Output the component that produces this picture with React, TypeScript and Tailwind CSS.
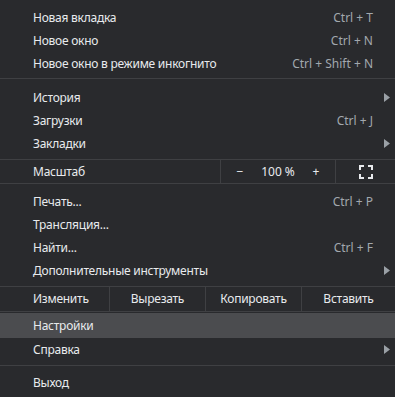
import React from "react";

const font = { fontFamily: '"Noto Sans", "Open Sans", sans-serif' };

function Arrow() {
  return (
    <svg width="6" height="9" viewBox="0 0 6 9" className="ml-auto mr-[5px]">
      <path d="M0 0 L6 4.5 L0 9 Z" fill="#9aa0a6" />
    </svg>
  );
}

function Item({ label, shortcut, sub, h = "h-[23px]" }: { label: string; shortcut?: string; sub?: boolean; h?: string }) {
  return (
    <div className={`flex items-center ${h} pl-[33px] ${sub ? "" : "pr-[22px]"}`}>
      <span className="text-[#e8eaed]">{label}</span>
      {shortcut && <span className="ml-auto tracking-normal text-[#a2a8ae]">{shortcut}</span>}
      {sub && <Arrow />}
    </div>
  );
}

export default function App() {
  return (
    <div className="w-[395px] h-[397px] bg-[#292a2d] text-[12px] tracking-[-0.25px] overflow-hidden flex flex-col pt-[6px]" style={font}>
      <Item label="Новая вкладка" shortcut="Ctrl + T" />
      <Item label="Новое окно" shortcut="Ctrl + N" />
      <Item label="Новое окно в режиме инкогнито" shortcut="Ctrl + Shift + N" />
      <div className="pt-[3px] pb-[7px]">
        <div className="h-px bg-[#3f4043]" />
      </div>
      <Item label="История" sub />
      <Item label="Загрузки" shortcut="Ctrl + J" />
      <Item label="Закладки" sub />
      <div className="h-[4px]" />
      <div className="flex h-[25px] border-y border-[#3f4043] items-stretch">
        <div className="w-[220px] flex items-center pl-[33px] text-[#e8eaed]">Масштаб</div>
        <div className="w-[115px] border-l border-[#3f4043] flex items-center text-[#e8eaed] tracking-normal">
          <span className="w-[38px] text-center">−</span>
          <span className="flex-1 text-center">100 %</span>
          <span className="w-[38px] text-center">+</span>
        </div>
        <div className="flex-1 border-l border-[#3f4043] flex items-center justify-center">
          <svg width="14" height="14" viewBox="0 0 14 14" fill="none" stroke="#e8eaed" strokeWidth="2">
            <path d="M1 5 V1 H5 M9 1 H13 V5 M13 9 V13 H9 M5 13 H1 V9" />
          </svg>
        </div>
      </div>
      <div className="h-[6px]" />
      <Item label="Печать..." shortcut="Ctrl + P" />
      <Item label="Трансляция..." />
      <Item label="Найти..." shortcut="Ctrl + F" />
      <Item label="Дополнительные инструменты" sub />
      <div className="h-[4px]" />
      <div className="flex h-[26px] border-y border-[#3f4043] items-stretch text-[#e8eaed]">
        <div className="w-[109px] flex items-center pl-[33px]">Изменить</div>
        <div className="w-[96px] border-l border-[#3f4043] flex items-center justify-center">Вырезать</div>
        <div className="w-[96px] border-l border-[#3f4043] flex items-center justify-center">Копировать</div>
        <div className="flex-1 border-l border-[#3f4043] flex items-center justify-center">Вставить</div>
      </div>
      <div className="h-[1px]" />
      <div className="bg-[#4b4c4f]">
        <Item label="Настройки" h="h-[25px]" />
      </div>
      <Item label="Справка" sub />
      <div className="pt-[4px] pb-[5px]">
        <div className="h-px bg-[#3f4043]" />
      </div>
      <Item label="Выход" h="h-[24px]" />
    </div>
  );
}
